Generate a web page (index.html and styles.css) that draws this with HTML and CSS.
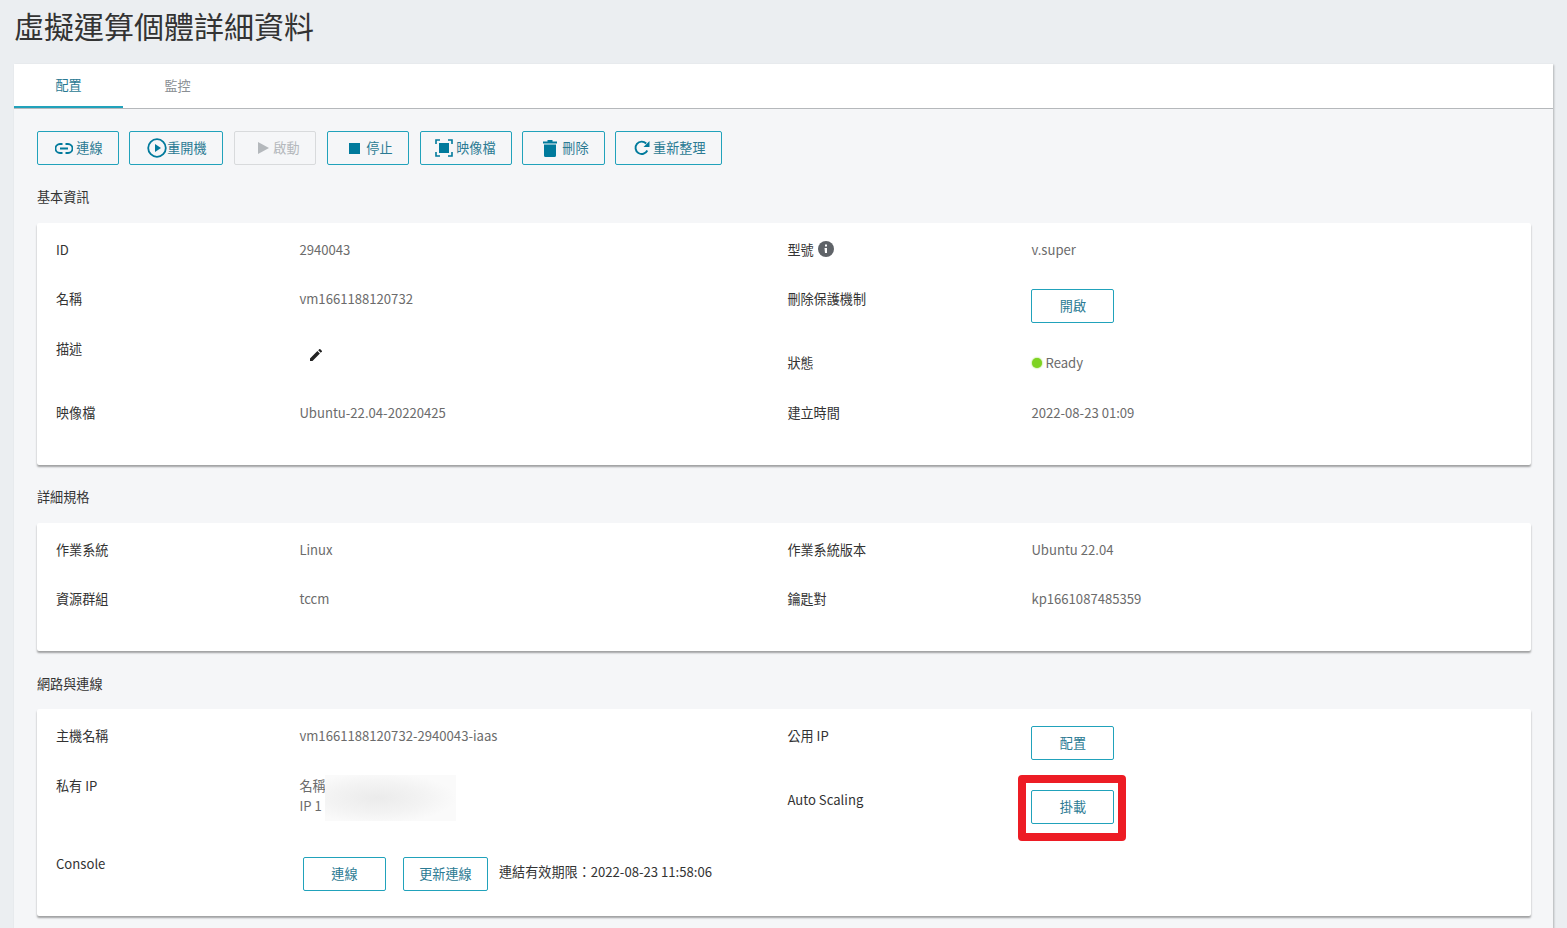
FILE: index.html
```html
<!DOCTYPE html>
<html lang="zh-Hant">
<head>
  <meta charset="UTF-8">
  <title>虛擬運算個體詳細資料</title>
  <link rel="stylesheet" href="styles.css">
</head>
<body>

  <h1 class="page-title">虛擬運算個體詳細資料</h1>

  <div class="panel">
    <div class="tabs">
      <div class="tab active">配置</div>
      <div class="tab">監控</div>
    </div>

    <div class="content">
      <div class="toolbar">
        <button class="btn w82">
          <svg class="ico link" viewBox="0 0 18 11"><path d="M7.500 1H5a4.500 4.500 0 0 0 0 9h2.500M10.500 1H13a4.500 4.500 0 0 1 0 9h-2.500M5 5.500h8" fill="none" stroke="currentColor" stroke-width="1.800"/></svg>連線
        </button>
        <button class="btn w94">
          <svg class="ico play-c" viewBox="0 0 20 20"><circle cx="10" cy="10" r="8.800" fill="none" stroke="currentColor" stroke-width="1.800"/><path d="M8 6l6 4-6 4z" fill="currentColor"/></svg>重開機
        </button>
        <button class="btn w82 disabled gap-11">
          <svg class="ico play" viewBox="0 0 11 12"><path d="M0 0l11 6-11 6z" fill="currentColor"/></svg>啟動
        </button>
        <button class="btn w82 gap-11">
          <svg class="ico stop" viewBox="0 0 11 11"><rect width="11" height="11" fill="currentColor"/></svg>停止
        </button>
        <button class="btn w92 gap-11">
          <svg class="ico frame" viewBox="0 0 18 18"><path d="M1 5V1h4M13 1h4v4M17 13v4h-4M5 17H1v-4" fill="none" stroke="currentColor" stroke-width="1.600"/><rect x="4" y="4" width="10" height="10" fill="currentColor"/></svg>映像檔
        </button>
        <button class="btn w83">
          <svg class="ico trash" viewBox="0 0 14 18"><path d="M0 2.500h14V4.500H0zM4.500 2.500V1h5v1.500zM1 5.500h12V16.500a1.500 1.500 0 0 1-1.500 1.500h-9A1.500 1.500 0 0 1 1 16.500z" fill="currentColor"/></svg>刪除
        </button>
        <button class="btn w107">
          <svg class="ico refresh" viewBox="0 0 16 16"><path d="M13.300 10.500A6.200 6.200 0 1 1 12.200 3.500" fill="none" stroke="currentColor" stroke-width="1.900"/><path d="M15.500 1v6h-6z" fill="currentColor"/></svg>重新整理
        </button>
      </div>

      <h2 class="section-title">基本資訊</h2>
      <div class="card card-basic">
        <div class="grid">
          <div class="label">ID</div>
          <div class="value">2940043</div>
          <div class="label">型號 <svg class="info" viewBox="0 0 16 16"><circle cx="8" cy="8" r="8" fill="#5f6368"/><rect x="7" y="3.500" width="2" height="2" fill="#fff"/><path d="M6.500 7h2.500v5H7z" fill="#fff"/></svg></div>
          <div class="value">v.super</div>

          <div class="label">名稱</div>
          <div class="value">vm1661188120732</div>
          <div class="label">刪除保護機制</div>
          <div><button class="btn w83">開啟</button></div>

          <div class="label">描述</div>
          <div class="value"><svg class="pencil" viewBox="0 0 12 12"><path d="M0 12V9.500L7.400 2.100l2.500 2.500L2.500 12zM8.200 1.300L9.300.200a.7.7 0 0 1 1 0l1.500 1.500a.7.7 0 0 1 0 1l-1.100 1.100z" fill="#222"/></svg></div>
          <div class="label shifted">狀態</div>
          <div class="value shifted"><span class="dot"></span>Ready</div>

          <div class="label">映像檔</div>
          <div class="value">Ubuntu-22.04-20220425</div>
          <div class="label">建立時間</div>
          <div class="value">2022-08-23 01:09</div>
        </div>
      </div>

      <h2 class="section-title">詳細規格</h2>
      <div class="card card-spec">
        <div class="grid">
          <div class="label">作業系統</div>
          <div class="value">Linux</div>
          <div class="label">作業系統版本</div>
          <div class="value">Ubuntu 22.04</div>

          <div class="label">資源群組</div>
          <div class="value">tccm</div>
          <div class="label">鑰匙對</div>
          <div class="value">kp1661087485359</div>
        </div>
      </div>

      <h2 class="section-title low">網路與連線</h2>
      <div class="card card-net">
        <div class="grid">
          <div class="label">主機名稱</div>
          <div class="value">vm1661188120732-2940043-iaas</div>
          <div class="label">公用 IP</div>
          <div><button class="btn w83">配置</button></div>

          <div class="label">私有 IP</div>
          <div class="value private">
            名稱<br>IP 1
            <span class="blurred"></span>
          </div>
          <div class="label shifted">Auto Scaling</div>
          <div class="shifted mount">
            <button class="btn w83">掛載</button>
            <span class="highlight"></span>
          </div>

          <div class="label">Console</div>
          <div class="console">
            <button class="btn w83">連線</button>
            <button class="btn w85">更新連線</button>
            <span class="expire">連結有效期限：2022-08-23 11:58:06</span>
          </div>
        </div>
      </div>
    </div>
  </div>

</body>
</html>
```

FILE: styles.css
```css
html, body {
  height: 100%;
}

body {
  margin: 0;
  background: #ebeef1;
  color: #333;
  font-family: "Noto Sans CJK TC", "Noto Sans", sans-serif;
  font-size: 13.120px;
  overflow: hidden;
}

.page-title {
  margin: 0;
  height: 64px;
  padding-left: 14px;
  font-size: 30px;
  font-weight: 400;
  line-height: 51px;
  color: #333;
}

.panel {
  margin: 0 14px;
  background: #f5f6f8;
  box-shadow: 1px 1px 2px rgba(0, 0, 0, .25);
  min-height: 900px;
}

.tabs {
  display: flex;
  height: 45px;
  box-sizing: border-box;
  background: #fff;
  border-bottom: 1px solid #b5b8bb;
}

.tab {
  width: 109px;
  height: 44px;
  box-sizing: border-box;
  line-height: 43px;
  text-align: center;
  color: #8a8f94;
}

.tab.active {
  color: #2a7a93;
  line-height: 42px;
  border-bottom: 2px solid #21a2bb;
}

.content {
  padding: 22px 22px 0 23px;
}

.toolbar {
  display: flex;
  gap: 10px;
  height: 34px;
}

.toolbar .btn {
  justify-content: flex-end;
  padding-right: 15.500px;
}

.toolbar .gap-11 {
  margin-left: 1px;
}

.btn {
  display: inline-flex;
  align-items: center;
  justify-content: center;
  box-sizing: border-box;
  height: 34px;
  padding: 0 0 2px;
  background: transparent;
  border: 1px solid #21a2bb;
  border-radius: 2px;
  color: #2a7a93;
  font-family: inherit;
  font-size: 13.120px;
  cursor: pointer;
}

.card .btn {
  background: #fff;
}

.btn.disabled {
  border-color: #d8dadc;
  color: #b4b8bc;
}

.w82 { width: 82px; }
.w83 { width: 83px; }
.w85 { width: 85px; }
.w92 { width: 92px; }
.w94 { width: 94px; }
.w107 { width: 107px; }

.ico {
  color: #007a9c;
  flex: none;
  position: relative;
  top: 1px;
}

.disabled .ico {
  color: #b4b8bc;
}

.link { width: 18px; height: 11px; margin-right: 3px; }
.play-c { width: 20px; height: 20px; margin-right: 0; }
.play { width: 11px; height: 12px; margin-right: 4px; }
.stop { width: 11px; height: 11px; margin-right: 6px; }
.frame { width: 18px; height: 18px; margin-right: 3px; }
.trash { width: 14px; height: 18px; margin-right: 5px; }
.refresh { width: 16px; height: 16px; margin-right: 3px; }

.section-title {
  margin: 0;
  height: 58px;
  padding-top: 22px;
  box-sizing: border-box;
  font-size: 13.120px;
  font-weight: 400;
  line-height: 20px;
  color: #333;
}

.section-title.low {
  padding-top: 23px;
}

.card {
  background: #fff;
  box-shadow: 0 2px 2px rgba(0, 0, 0, .35);
  border-radius: 2px;
  padding: 17px 0 0 19px;
  box-sizing: border-box;
}

.card-basic { height: 242px; }
.card-spec { height: 128px; }
.card-net { height: 207px; }

.grid {
  display: grid;
  grid-template-columns: 243.400px 488px 244px 1fr;
  grid-auto-rows: 49px;
}

.card-basic .grid {
  grid-template-rows: 49px 50px 64px 49px;
}

.card-net .grid {
  grid-template-rows: 50px 78px 62px;
}

.label {
  line-height: 20px;
  color: #333;
}

.value {
  line-height: 20px;
  color: #6b6b6b;
}

.info {
  width: 16px;
  height: 16px;
  margin-left: 1px;
  position: relative;
  top: 1px;
  vertical-align: -1px;
}

.pencil {
  display: block;
  width: 12px;
  height: 12px;
  margin: 10px 0 0 11px;
}

.shifted {
  padding-top: 14px;
}

.dot {
  display: inline-block;
  width: 10px;
  height: 10px;
  margin: 0 3.500px 0 .6px;
  border-radius: 50%;
  background: #7ed321;
  box-shadow: 0 0 2px #7ed321;
}

.private {
  position: relative;
}

.blurred {
  position: absolute;
  left: 25.600px;
  top: -1px;
  width: 131px;
  height: 46px;
  background: radial-gradient(ellipse 60% 55% at 40% 50%, #ebebeb, #f3f3f3 60%, #fafafa 100%);
}

.mount {
  position: relative;
}

.highlight {
  position: absolute;
  left: -13.400px;
  top: -1px;
  width: 92px;
  height: 50px;
  border: 8px solid #ed1c24;
  border-radius: 4px;
  pointer-events: none;
}

.console {
  display: flex;
  align-items: flex-start;
  padding: 3px 0 0 3.600px;
}

.console .w85 {
  margin-left: 17px;
}

.expire {
  margin-left: 11px;
  margin-top: 5px;
  line-height: 20px;
  white-space: nowrap;
  color: #333;
}
```
